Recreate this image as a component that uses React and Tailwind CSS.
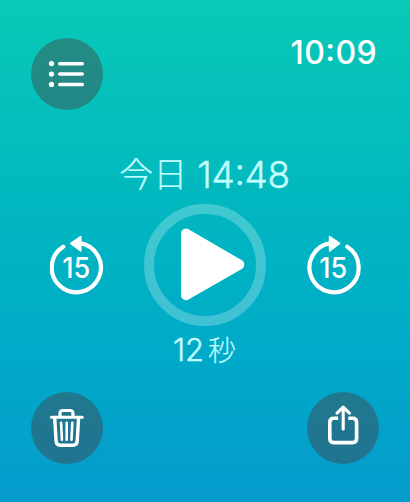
import React from "react";

function RoundButton({ label, children }) {
  return (
    <button
      type="button"
      aria-label={label}
      className="h-[72px] w-[72px] shrink-0 rounded-full bg-[rgba(78,52,54,0.4)] text-white"
    >
      <svg viewBox="0 0 72 72" className="h-[72px] w-[72px]" fill="none" stroke="currentColor" strokeLinecap="round" strokeLinejoin="round">
        {children}
      </svg>
    </button>
  );
}

function SkipButton({ label, forward }) {
  return (
    <button type="button" aria-label={label} className="h-[60px] w-[54px] text-white">
      <svg viewBox="0 0 54 60" className="h-[60px] w-[54px]">
        <g transform={forward ? "translate(53.4 0) scale(-1 1)" : undefined}>
          <path
            d="M13.2 11.8A24.6 24.6 0 1 0 29.5 8.2"
            fill="none"
            stroke="currentColor"
            strokeWidth="4.2"
            strokeLinecap="round"
          />
          <path
            d="M20.8 8.4 30.7 1.7V15.8Z"
            fill="currentColor"
            stroke="currentColor"
            strokeWidth="1.8"
            strokeLinejoin="round"
          />
        </g>
        <text x="26.2" y="42.8" textAnchor="middle" fill="currentColor" textLength="28" lengthAdjust="spacingAndGlyphs" className="text-[28px] font-[550]">
          15
        </text>
      </svg>
    </button>
  );
}

export default function App() {
  return (
    <main className="flex h-[502px] w-[410px] flex-col overflow-hidden bg-[linear-gradient(to_bottom,#09c9b6_0%,#00b3c2_50%,#00a9c9_72%,#069bcc_100%)] font-['Inter','Noto_Sans_CJK_JP',sans-serif] text-white">
      <header className="flex h-[110px] items-start justify-between pt-[38px] pr-[33px] pl-[31px]">
        <RoundButton label="リスト">
          <g fill="currentColor" stroke="none">
            <circle cx="20.5" cy="25.6" r="2.6" />
            <circle cx="20.5" cy="36.1" r="2.6" />
            <circle cx="20.5" cy="46.4" r="2.6" />
          </g>
          <path d="M28.7 25.7H51.3M28.7 36.1H51.3M28.7 46.4H51.3" strokeWidth="3.5" />
        </RoundButton>
        <time className="text-[32px] leading-[30px] font-medium tracking-[0.4px]">
          10<span className="inline-block -translate-y-[3px]">:</span>09
        </time>
      </header>

      <section className="flex h-[282px] flex-col items-center pt-[45px]">
        <div className="flex h-[40px] items-center gap-2.5 pr-px text-[#c3ffff]">
          <span className="text-[34px] leading-[40px] font-light [-webkit-text-stroke:0.2px_#c3ffff]">今日</span>
          <span className="text-[37px] leading-[40px] font-light tracking-[-0.3px] [-webkit-text-stroke:0.4px_#c3ffff]">
            14<span className="inline-block -translate-y-[3px]">:</span>48
          </span>
        </div>

        <div className="mt-[9px] flex h-[122px] w-full items-center pl-[50px]">
          <SkipButton label="15秒戻る" />
          <button
            type="button"
            aria-label="再生"
            className="mr-[41px] ml-10 h-[122px] w-[122px] rounded-full border-[10px] border-white/25"
          >
            <svg viewBox="0 0 102 102" className="h-[102px] w-[102px]">
              <path
                d="M32 19.5V81.2L85.3 50.6Z"
                fill="white"
                stroke="white"
                strokeWidth="10"
                strokeLinejoin="round"
              />
            </svg>
          </button>
          <SkipButton label="15秒進む" forward />
        </div>

        <div className="mt-1 flex h-[40px] items-center gap-1 pr-px text-[#c3ffff]">
          <span className="text-[31px] leading-[40px] font-light [-webkit-text-stroke:0.4px_#c3ffff]">12</span>
          <span className="pt-0.5 text-[28px] leading-[40px] font-light [-webkit-text-stroke:0.2px_#c3ffff]">秒</span>
        </div>
      </section>

      <footer className="flex justify-between pr-[31px] pl-[31px]">
        <RoundButton label="削除">
          <path d="M20.5 25.3H51.2" strokeWidth="3" />
          <path d="M29 24V21.5Q29 18.5 32 18.5H39Q42 18.5 42 21.5V24" strokeWidth="3.2" />
          <path d="M23.7 26 25.1 49.2Q25.4 53.3 29.3 53.3H42Q45.9 53.3 46.2 49.2L47.6 26" strokeWidth="3.4" />
          <path d="M30.1 30.8 30.9 47.7M35.7 30.8V47.7M41.3 30.8 40.5 47.7" strokeWidth="2.6" />
        </RoundButton>
        <RoundButton label="共有">
          <path
            d="M31.1 26.3H26.8Q22.8 26.3 22.8 30.3V46.6Q22.8 50.6 26.8 50.6H45.6Q49.6 50.6 49.6 46.6V30.3Q49.6 26.3 45.6 26.3H41.3"
            strokeWidth="3.6"
            strokeLinecap="butt"
          />
          <path d="M36.2 37V15.6M30 21.2 36.2 15.2 42.4 21.2" strokeWidth="3.1" />
        </RoundButton>
      </footer>
    </main>
  );
}
